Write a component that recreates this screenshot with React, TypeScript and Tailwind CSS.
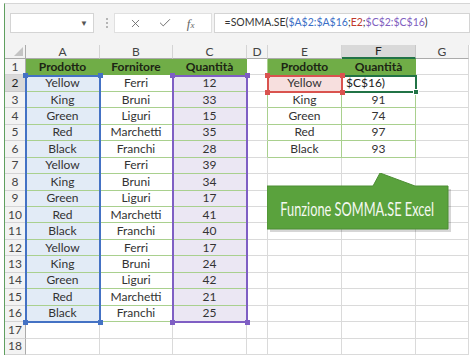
import { X, Check } from "lucide-react";

const data = [
  ["Yellow", "Ferri", "12"],
  ["King", "Bruni", "33"],
  ["Green", "Liguri", "15"],
  ["Red", "Marchetti", "35"],
  ["Black", "Franchi", "28"],
  ["Yellow", "Ferri", "39"],
  ["King", "Bruni", "34"],
  ["Green", "Liguri", "17"],
  ["Red", "Marchetti", "41"],
  ["Black", "Franchi", "40"],
  ["Yellow", "Ferri", "17"],
  ["King", "Bruni", "24"],
  ["Green", "Liguri", "42"],
  ["Red", "Marchetti", "21"],
  ["Black", "Franchi", "25"],
];

const summary = [
  ["Yellow", "$C$16)"],
  ["King", "91"],
  ["Green", "74"],
  ["Red", "97"],
  ["Black", "93"],
];

const letters = ["", "A", "B", "C", "D", "E", "F", "G"];

function cellText(r: number, c: number): string {
  if (r === 0) return letters[c];
  if (c === 0) return String(r);
  if (r === 1) return ["", "Prodotto", "Fornitore", "Quantità", "", "Prodotto", "Quantità", ""][c];
  if (r >= 2 && r <= 16 && c >= 1 && c <= 3) return data[r - 2][c - 1];
  if (r >= 2 && r <= 6 && (c === 5 || c === 6)) return summary[r - 2][c - 5];
  return "";
}

function cellClass(r: number, c: number): string {
  if (r === 0 && c === 0) return "relative bg-[#f3f3f3] border-r border-b border-[#ababab]";
  if (r === 0 && c === 6) return "bg-[#d9d9d9] border-r border-r-[#c8c8c8] border-b-2 border-b-[#217346] text-[#222]";
  if (r === 0) return "bg-[#f3f3f3] border-r border-r-[#d4d4d4] border-b border-b-[#ababab] text-[#444]";
  if (c === 0 && r === 2) return "bg-[#d9d9d9] border-r border-r-[#ababab] border-b border-b-[#c8c8c8] text-[#222]";
  if (c === 0) return "bg-[#f3f3f3] border-r border-r-[#ababab] border-b border-b-[#d4d4d4] text-[#444]";
  if (r === 1 && ((c >= 1 && c <= 3) || c === 5 || c === 6))
    return "bg-[#70ad47] border-r border-b border-[#70ad47] font-bold text-[#1c2414]";
  if (r >= 2 && r <= 16 && c === 1) return "bg-[#e2ebf6] border-r border-b border-[#a9d08e] text-[#333]";
  if (r >= 2 && r <= 16 && c === 3) return "bg-[#ebe7f3] border-r border-b border-[#a9d08e] text-[#333]";
  if (r >= 2 && r <= 16 && c === 2) return "bg-white border-r border-b border-[#a9d08e] text-[#333]";
  if (r === 2 && c === 5) return "bg-[#f7dfde] border-r border-b border-[#a9d08e] text-[#333]";
  if (r === 2 && c === 6) return "bg-white border-r border-b border-[#a9d08e] text-[#222] !justify-start pl-[4px]";
  if (r >= 3 && r <= 6 && (c === 5 || c === 6)) return "bg-white border-r border-b border-[#a9d08e] text-[#333]";
  if (r >= 1 && r <= 6 && c === 4) return "bg-white border-r border-r-[#a9d08e] border-b border-b-[#dadada]";
  return "bg-white border-r border-b border-[#dadada]";
}

function Handle({ pos, color }: { pos: string; color: string }) {
  return <span className={`absolute w-[5px] h-[5px] ${pos} ${color}`} />;
}

function Callout() {
  return (
    <div className="absolute left-[267px] top-[173px] w-[186px] h-[62px]">
      <svg width="186" height="62" viewBox="0 0 186 62" className="absolute left-0 top-0">
        <path d="M3 16 H109 L116 3 L151 16 H184 V59 H3 Z" fill="#000" opacity="0.16" />
        <path d="M0 13 H106 L113 0 L148 13 H181 V56 H0 Z" fill="#5aa23d" stroke="#4d8e35" strokeWidth="1" />
      </svg>
      <div className="absolute left-0 top-[13px] w-[181px] h-[43px] flex items-center justify-center">
        <span className="font-['Lato'] text-[20px] text-[#f4f8f0] whitespace-nowrap scale-x-[0.64] inline-block">
          Funzione SOMMA.SE Excel
        </span>
      </div>
    </div>
  );
}

export default function App() {
  const rows = Array.from({ length: 19 }, (_, i) => i);
  const cols = Array.from({ length: 8 }, (_, i) => i);
  return (
    <div className="relative w-[474px] h-[361px] bg-white font-['Lato'] overflow-hidden">
      <div className="ml-[4px] mt-[3px] w-[466px] border-l border-t border-l-[#5f9f5f] border-t-[#d6d6d6]">
        {/* barra della formula */}
        <div className="h-[41px] bg-[#f3f3f3] flex items-start pt-[9px]">
          <div className="ml-[5px] w-[84px] h-[20px] bg-white border border-[#d4d4d4] flex items-center justify-end pr-[5px]">
            <span className="text-[8px] text-[#555]">▼</span>
          </div>
          <div className="ml-[12px] w-[3px] h-[20px] flex flex-col items-center justify-center gap-[2px]">
            <span className="w-[2px] h-[2px] bg-[#b5b5b5]" />
            <span className="w-[2px] h-[2px] bg-[#b5b5b5]" />
            <span className="w-[2px] h-[2px] bg-[#b5b5b5]" />
          </div>
          <div className="ml-[5px] w-[98px] h-[20px] bg-white border border-[#e0e0e0] flex items-center text-[#666]">
            <X size={13} strokeWidth={1.6} className="ml-[14px]" />
            <Check size={14} strokeWidth={1.6} className="ml-[16px]" />
            <span className="ml-[15px] font-['Liberation_Serif'] italic text-[13px] leading-none">
              f<span className="text-[9px]">x</span>
            </span>
          </div>
          <div className="ml-[2px] w-[257px] h-[20px] bg-white border border-[#d4d4d4] flex items-center pl-[10px] text-[10.5px] text-[#333] whitespace-nowrap">
            <span>=SOMMA.SE(</span>
            <span className="text-[#3b6fc6]">$A$2:$A$16</span>
            <span>;</span>
            <span className="text-[#c0392b]">E2</span>
            <span>;</span>
            <span className="text-[#8060c0]">$C$2:$C$16</span>
            <span>)</span>
          </div>
        </div>

        {/* griglia */}
        <div className="relative grid grid-cols-[21px_74px_73px_74px_21px_74px_74px_53px] grid-rows-[14px_repeat(18,minmax(0,1fr))] w-[464px] h-[310px] text-[12px]">
          {rows.map((r) =>
            cols.map((c) => (
              <div key={`${r}-${c}`} className={`flex items-center justify-center leading-none ${cellClass(r, c)}`}>
                {r === 0 && c === 0 ? (
                  <span className="absolute right-[2px] bottom-[2px] w-0 h-0 border-l-[9px] border-l-transparent border-b-[9px] border-b-[#c4c4c4]" />
                ) : (
                  cellText(r, c)
                )}
              </div>
            ))
          )}

          {/* intervalli della formula */}
          <div className="absolute left-[20px] top-[29.5px] w-[76px] h-[248.5px] border-2 border-[#4472c4]">
            <Handle pos="-left-[4px] -top-[4px]" color="bg-[#4472c4]" />
            <Handle pos="-right-[4px] -top-[4px]" color="bg-[#4472c4]" />
            <Handle pos="-left-[4px] -bottom-[4px]" color="bg-[#4472c4]" />
            <Handle pos="-right-[4px] -bottom-[4px]" color="bg-[#4472c4]" />
          </div>
          <div className="absolute left-[167px] top-[29.5px] w-[76px] h-[248.5px] border-2 border-[#7f5fc4]">
            <Handle pos="-left-[4px] -top-[4px]" color="bg-[#7f5fc4]" />
            <Handle pos="-right-[4px] -top-[4px]" color="bg-[#7f5fc4]" />
            <Handle pos="-left-[4px] -bottom-[4px]" color="bg-[#7f5fc4]" />
            <Handle pos="-right-[4px] -bottom-[4px]" color="bg-[#7f5fc4]" />
          </div>
          <div className="absolute left-[336px] top-[29.5px] w-[76px] h-[18.5px] border-2 border-[#217346]">
            <span className="absolute -right-[4px] -bottom-[4px] w-[6px] h-[6px] bg-[#217346] border border-white" />
          </div>
          <div className="absolute left-[262px] top-[29.5px] w-[76px] h-[18.5px] border-2 border-[#d9534f]">
            <Handle pos="-left-[4px] -top-[4px]" color="bg-[#d9534f]" />
            <Handle pos="-right-[4px] -top-[4px]" color="bg-[#d9534f]" />
            <Handle pos="-left-[4px] -bottom-[4px]" color="bg-[#d9534f]" />
            <Handle pos="-right-[4px] -bottom-[4px]" color="bg-[#d9534f]" />
          </div>
        </div>
      </div>
      <Callout />
    </div>
  );
}
